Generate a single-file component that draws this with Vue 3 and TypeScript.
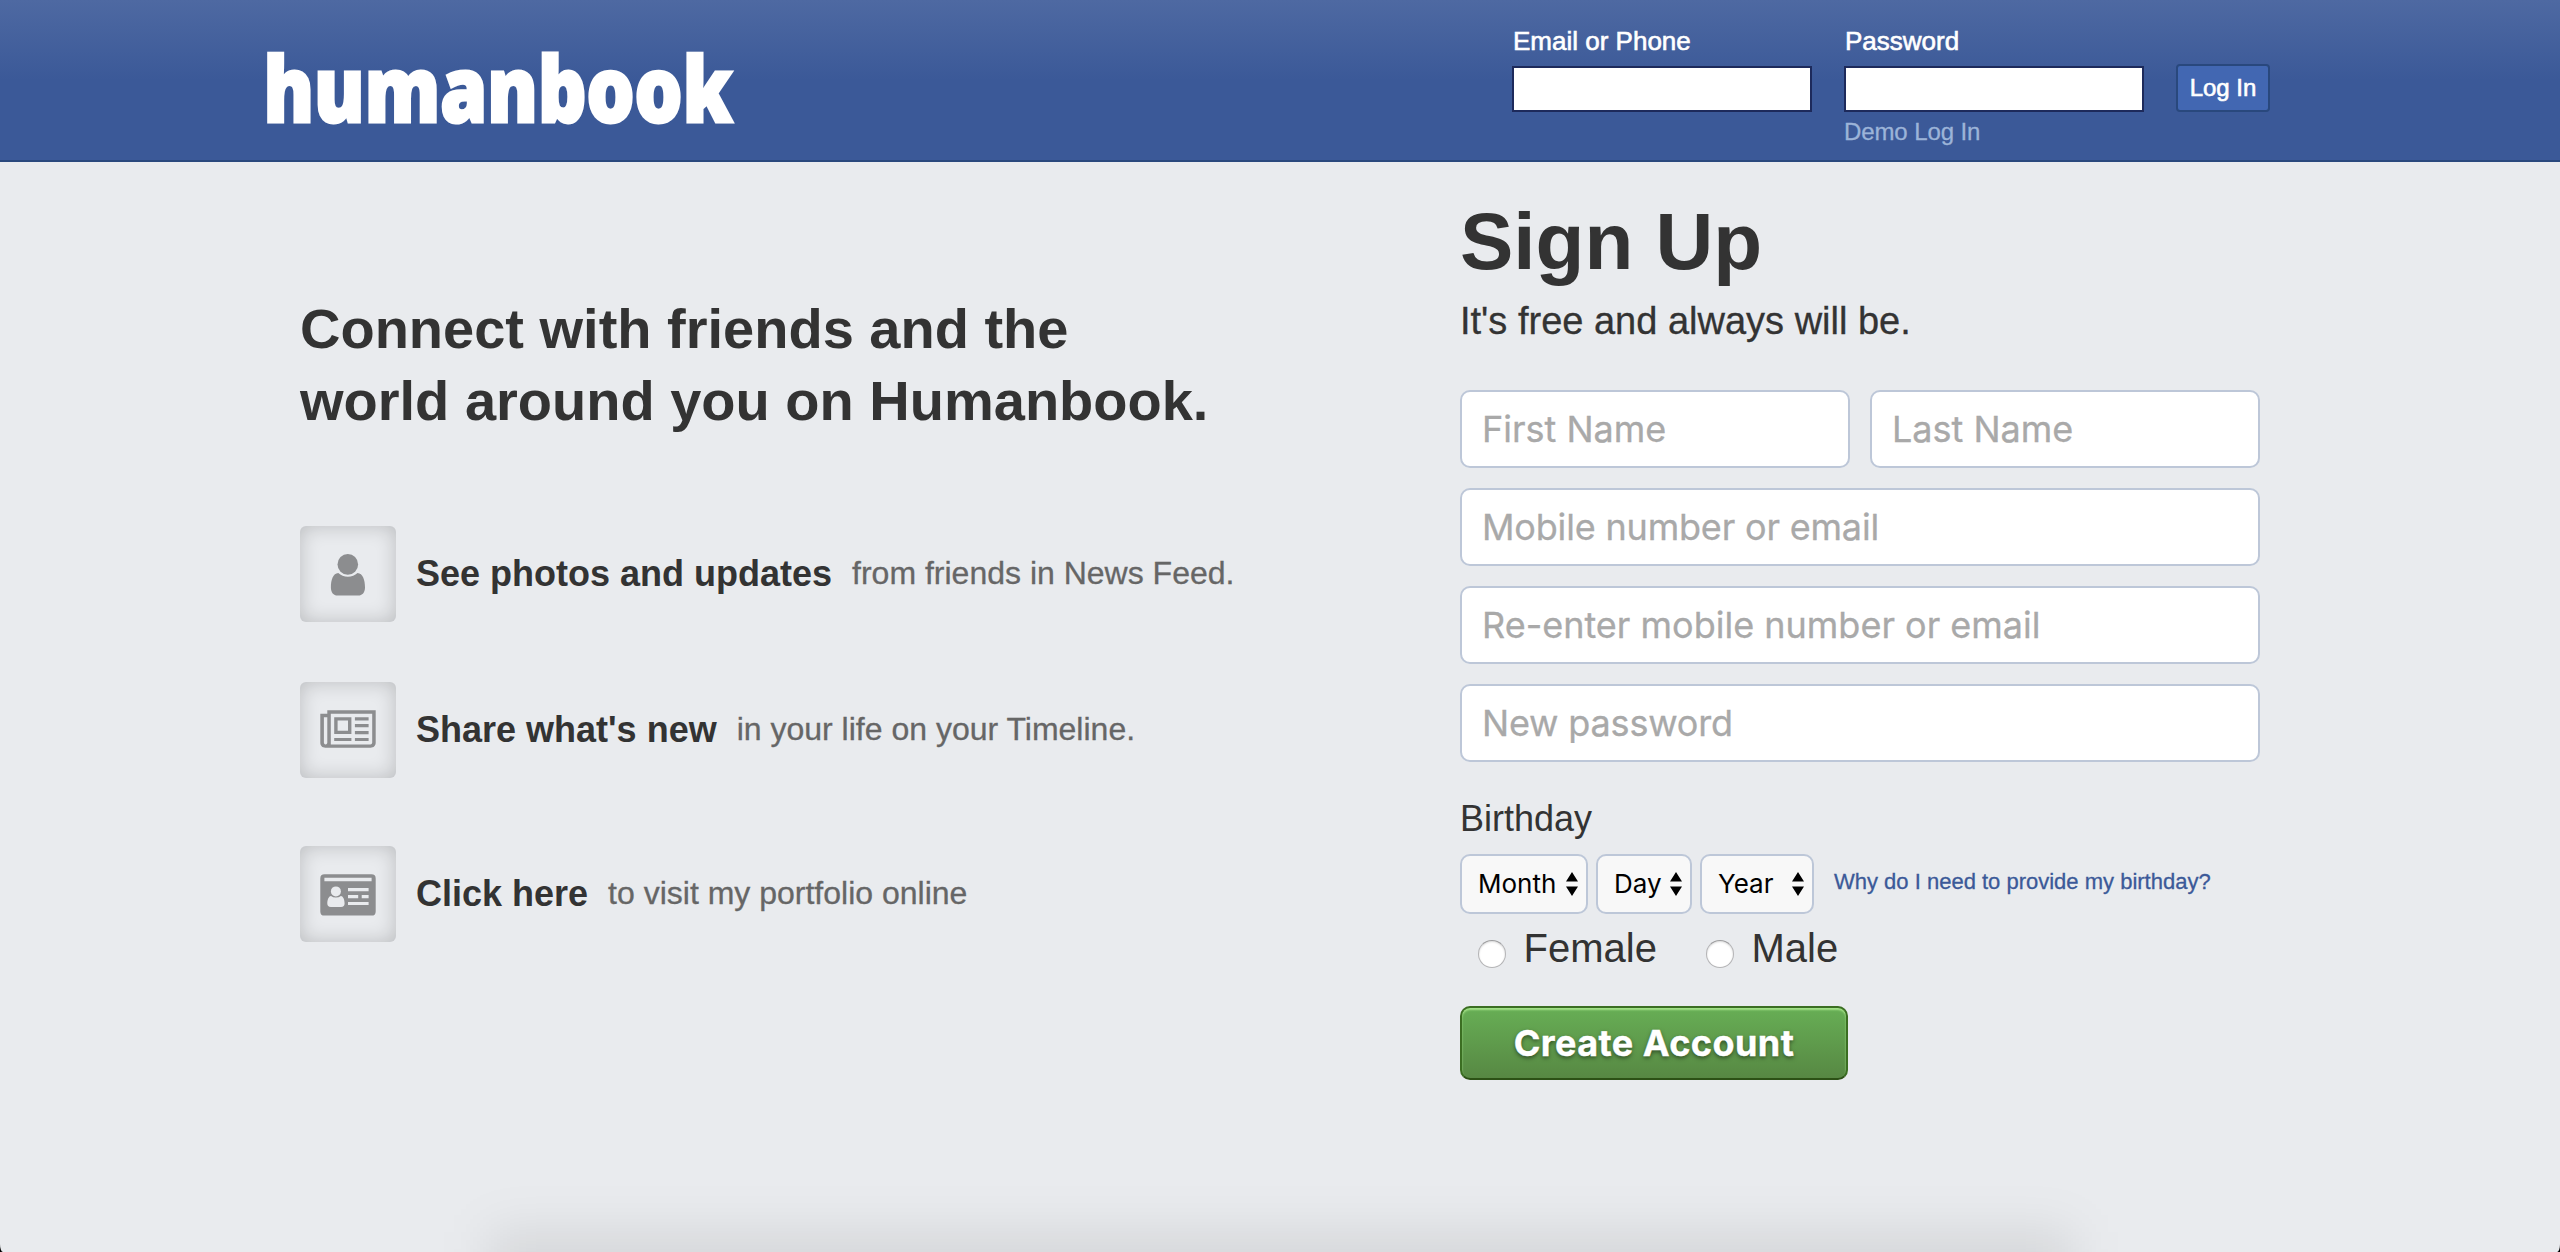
<script setup lang="ts">
import { ref } from 'vue'

interface Feature {
  icon: 'user' | 'news' | 'card'
  title: string
  detail: string
}

const features: Feature[] = [
  { icon: 'user', title: 'See photos and updates', detail: 'from friends in News Feed.' },
  { icon: 'news', title: "Share what's new", detail: 'in your life on your Timeline.' },
  { icon: 'card', title: 'Click here', detail: 'to visit my portfolio online' },
]

const birthParts = ['Month', 'Day', 'Year']
const genders = ['Female', 'Male']

const email = ref('')
const password = ref('')
</script>

<template>
  <div class="page">
    <header class="topbar">
      <svg class="logo" width="470" height="90" viewBox="0 0 470 90">
        <text x="-2.5" y="77.5" textLength="469" lengthAdjust="spacingAndGlyphs">humanbook</text>
      </svg>
      <form class="login" @submit.prevent>
        <label class="login-field">
          <span>Email or Phone</span>
          <input v-model="email" type="text" />
        </label>
        <div class="login-field">
          <span>Password</span>
          <input v-model="password" type="password" />
          <a class="demo">Demo Log In</a>
        </div>
        <button class="login-btn">Log In</button>
      </form>
    </header>

    <main class="main">
      <section class="intro">
        <h2>Connect with friends and the<br />world around you on Humanbook.</h2>
        <ul>
          <li v-for="f in features" :key="f.icon">
            <span class="tile">
              <svg width="96" height="96" viewBox="0 0 96 96" fill="#8c8d8f">
                <template v-if="f.icon === 'user'">
                  <circle cx="47.8" cy="38.4" r="10.3" />
                  <path d="M38.3 47C33 47.3 30.9 54 30.9 61.5C30.9 66.5 33.5 69.6 37.6 69.6H58.2C62.3 69.6 65 66.5 65 61.5C65 54 62.8 47.3 57.5 47C55 49.3 51.7 50.7 47.9 50.7C44.1 50.7 40.8 49.3 38.3 47Z" />
                </template>
                <template v-else-if="f.icon === 'news'">
                  <path fill-rule="evenodd" d="M27.3 28.3H75.7V60.6C75.7 63.9 73.7 65.8 70.6 65.8H25.4C22.2 65.8 20.3 63.8 20.3 60.6V31.8H27.3ZM30.8 31.8V62.4H70.4C71.6 62.4 72.2 61.7 72.2 60.6V31.8ZM23.9 35.2V60.6C23.9 61.7 24.5 62.4 25.6 62.4C26.8 62.4 27.3 61.7 27.3 60.6V35.2Z" />
                  <path fill-rule="evenodd" d="M34.2 35.2H51.4V52.1H34.2ZM37.6 38.6V48.8H48V38.6Z" />
                  <path d="M34.2 55.9H51.4V59.1H34.2ZM54.9 35.2H68.6V38.4H54.9ZM54.9 42.1H68.6V45.3H54.9ZM54.9 49H68.6V52.2H54.9ZM54.9 55.9H68.6V59.1H54.9Z" />
                </template>
                <template v-else>
                  <path fill-rule="evenodd" d="M24.5 28.2H71.5Q75.7 28.2 75.7 32.4V65.4Q75.7 69.6 71.5 69.6H24.5Q20.3 69.6 20.3 65.4V32.4Q20.3 28.2 24.5 28.2ZM24.4 31.8H71.6V35.2H24.4Z" />
                  <g fill="#e9ebee">
                    <circle cx="35.9" cy="45.4" r="5" />
                    <path d="M31 50C28.5 50.4 27.3 54 27.3 57.6Q27.3 61 30.8 61H41Q44.6 61 44.6 57.6C44.6 54 43.4 50.4 40.9 50Q38.8 51.5 35.9 51.5Q33 51.5 31 50Z" />
                    <path d="M48 42H68.6V45.2H48ZM48 49H58.2V52.2H48ZM61.7 49H68.6V52.2H61.7ZM48 55.9H68.6V59.1H48Z" />
                  </g>
                </template>
              </svg>
            </span>
            <strong>{{ f.title }}</strong>
            <span class="detail">{{ f.detail }}</span>
          </li>
        </ul>
      </section>

      <section class="signup">
        <h1>Sign Up</h1>
        <p class="tagline">It's free and always will be.</p>
        <form class="fields" @submit.prevent>
          <div class="names">
            <input class="field" placeholder="First Name" />
            <input class="field" placeholder="Last Name" />
          </div>
          <input class="field tight" placeholder="Mobile number or email" />
          <input class="field" placeholder="Re-enter mobile number or email" />
          <input class="field tight" type="password" placeholder="New password" />
        </form>
        <p class="birth-label">Birthday</p>
        <div class="birth">
          <div v-for="p in birthParts" :key="p" class="picker" :class="p.toLowerCase()">
            <span>{{ p }}</span>
            <svg width="12" height="24" viewBox="0 0 12 24">
              <path d="M6 0L12 9.5H0ZM6 24L0 14.5H12Z" />
            </svg>
          </div>
          <a class="why">Why do I need to provide my birthday?</a>
        </div>
        <div class="genders">
          <label v-for="g in genders" :key="g"><i></i><span>{{ g }}</span></label>
        </div>
        <button class="create">Create Account</button>
      </section>
    </main>
    <div class="bottom-shade"></div>
  </div>
</template>

<style>
body {
  margin: 0;
  background: #000;
}
</style>

<style scoped>
.page {
  position: relative;
  width: 2560px;
  height: 1252px;
  overflow: hidden;
  background: #e9ebee;
  border-radius: 0 0 3px 3px / 0 0 8px 8px;
  color: #333;
  font-family: "Liberation Sans", Arial, sans-serif;
}
.page * {
  box-sizing: border-box;
}
h1, h2, p, ul {
  margin: 0;
  padding: 0;
}
input, button {
  margin: 0;
  padding: 0;
  outline: none;
}
.topbar {
  display: flex;
  justify-content: space-between;
  align-items: flex-start;
  height: 162px;
  padding: 0 290px 0 266px;
  border-bottom: 2px solid #29487d;
  background: linear-gradient(#4e69a2, #3b5998 50%);
}
.logo {
  margin-top: 44px;
  overflow: visible;
}
.logo text {
  fill: #fff;
  stroke: #fff;
  stroke-width: 3px;
  font-family: "Open Sans", "Noto Sans", sans-serif;
  font-weight: 800;
  font-size: 90px;
}
.login {
  display: flex;
  gap: 32px;
  padding-top: 26px;
}
.login-field {
  display: flex;
  flex-direction: column;
  width: 300px;
  color: #fff;
  font-size: 26px;
  line-height: 30px;
}
.login-field span {
  padding-left: 1px;
  -webkit-text-stroke: 0.6px #fff;
}
.login-field input {
  width: 300px;
  height: 46px;
  margin-top: 10px;
  border: 2px solid #1d2a5b;
  border-radius: 0;
  background: #fff;
}
.demo {
  margin-top: 6px;
  color: #9cb4d8;
  font-size: 24px;
  line-height: 28px;
  letter-spacing: -0.1px;
  -webkit-text-stroke: 0.3px #9cb4d8;
}
.login-btn {
  width: 94px;
  height: 48px;
  margin-top: 38px;
  border: 2px solid #29487d;
  border-radius: 4px;
  background: #4267b2;
  color: #fff;
  font: 24px/44px "Liberation Sans", Arial, sans-serif;
  -webkit-text-stroke: 0.6px #fff;
}
.main {
  display: flex;
}
.intro {
  width: 1460px;
  padding: 131px 0 0 300px;
}
.intro h2 {
  font-size: 56px;
  line-height: 72px;
}
.intro ul {
  margin-top: 89px;
  list-style: none;
}
.intro li {
  display: flex;
  align-items: center;
  gap: 20px;
  height: 96px;
  margin-bottom: 60px;
  white-space: nowrap;
}
.intro li + li {
  margin-bottom: 68px;
}
.tile {
  width: 96px;
  height: 96px;
  border-radius: 6px;
  box-shadow: inset 0 0 20px rgba(0, 0, 0, 0.2);
}
.tile svg {
  display: block;
}
.intro strong {
  font-size: 36px;
  line-height: 42px;
}
.detail {
  margin-bottom: 2px;
  color: #666;
  font-size: 32px;
  line-height: 38px;
  -webkit-text-stroke: 0.3px #666;
}
.signup {
  width: 800px;
  padding-top: 34px;
}
.signup h1 {
  font-size: 80px;
  line-height: 92px;
}
.tagline {
  margin-top: 11px;
  font-size: 38px;
  line-height: 44px;
  -webkit-text-stroke: 0.3px #333;
}
.fields {
  display: flex;
  flex-direction: column;
  gap: 20px;
  margin-top: 47px;
}
.names {
  display: grid;
  grid-template-columns: 1fr 1fr;
  gap: 20px;
}
.field {
  width: 100%;
  height: 78px;
  padding: 0 20px;
  border: 2px solid #bdc7d8;
  border-radius: 10px;
  background: #fff;
  font: 36px Inter, sans-serif;
}
.field.tight {
  letter-spacing: -0.18px;
}
.field::placeholder {
  color: #a9a9a9;
  opacity: 1;
  -webkit-text-stroke: 0.3px #a9a9a9;
}
.birth-label {
  margin-top: 36px;
  font-size: 36px;
  line-height: 42px;
}
.birth {
  display: flex;
  gap: 8px;
  margin-top: 14px;
}
.picker {
  display: flex;
  align-items: center;
  justify-content: space-between;
  height: 60px;
  padding: 0 8px 0 16px;
  border: 2px solid #bdc7d8;
  border-radius: 10px;
  background: #f8f8f8;
  color: #000;
  font: 26px/56px Inter, sans-serif;
}
.month {
  width: 128px;
}
.day {
  width: 96px;
}
.year {
  width: 114px;
}
.why {
  margin: 15px 0 0 12px;
  color: #3b5998;
  font-size: 22px;
  line-height: 26px;
  -webkit-text-stroke: 0.3px #3b5998;
}
.genders {
  display: flex;
  margin: 11px 0 0 18px;
  font-size: 40px;
  line-height: 46px;
}
.genders label {
  display: flex;
  width: 228px;
}
.genders i {
  width: 28px;
  height: 28px;
  margin: 15px 17.5px 0 0;
  border: 1px solid #b4b4b6;
  border-top-color: #9c9c9e;
  border-radius: 50%;
  background: #fff;
  box-shadow: inset 0 1px 2px rgba(0, 0, 0, 0.15);
}
.create {
  display: block;
  width: 388px;
  height: 74px;
  margin-top: 35px;
  border: 2px solid;
  border-color: #3b6e22 #3b6e22 #2c5115;
  border-radius: 10px;
  background: linear-gradient(#67ae55, #578843);
  box-shadow: inset 0 2px 2px #a4e388;
  color: #fff;
  font: bold 36px/70px Inter, sans-serif;
  letter-spacing: 0.45px;
  text-shadow: 0 2px 4px rgba(0, 0, 0, 0.5);
  -webkit-text-stroke: 0.4px #fff;
}
.bottom-shade {
  position: absolute;
  left: 490px;
  top: 1232px;
  width: 1582px;
  height: 150px;
  background: rgba(0, 0, 0, 0.088);
  filter: blur(25px);
}
</style>
